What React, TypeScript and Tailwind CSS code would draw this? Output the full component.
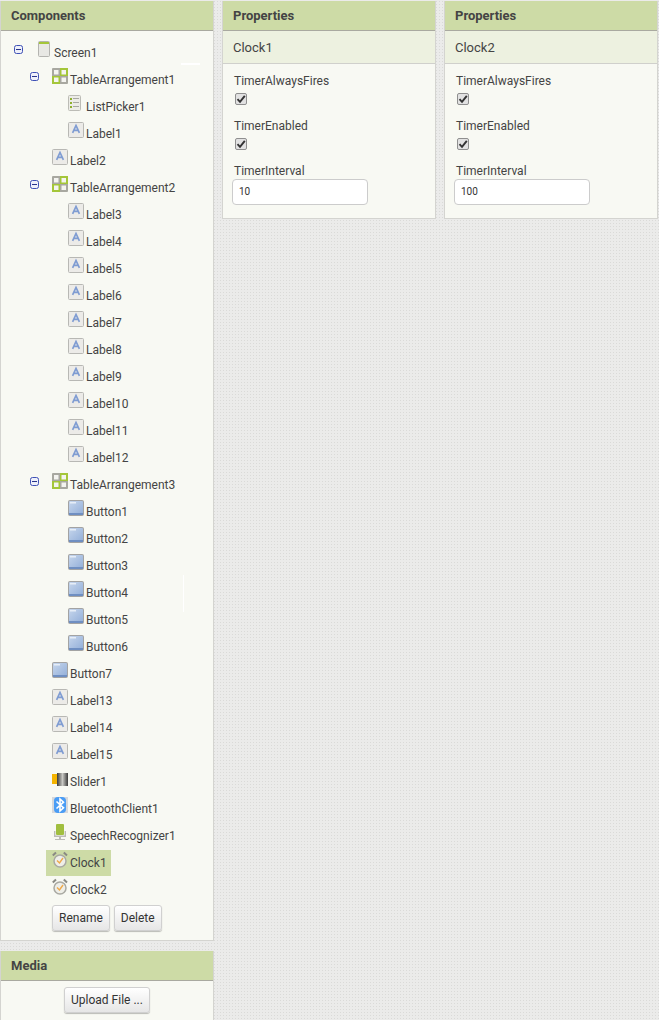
import React from 'react';

const font = "font-['Roboto',sans-serif]";

function Minus() {
  return (
    <svg width="9" height="9" viewBox="0 0 9 9" className="block">
      <rect x="0.5" y="0.5" width="8" height="8" rx="2" fill="#eef0fa" stroke="#3f51b5" />
      <rect x="2" y="4" width="5" height="1" fill="#27348b" />
    </svg>
  );
}

function ScreenIcon() {
  return (
    <svg width="12" height="16" viewBox="0 0 12 16" className="block">
      <rect x="0.5" y="0.5" width="11" height="15" rx="1" fill="#e8e8e4" stroke="#b4b4b0" />
      <rect x="1" y="1" width="10" height="2" fill="#a4c639" />
    </svg>
  );
}

function TableIcon() {
  return (
    <svg width="16" height="16" viewBox="0 0 16 16" className="block">
      <rect width="16" height="16" rx="1" fill="#a8a8a0" />
      <rect x="8" y="0" width="8" height="8" fill="#a4c639" />
      <rect x="0" y="8" width="8" height="8" fill="#a4c639" />
      <rect x="2" y="2" width="4.5" height="4.5" fill="#f4f4f0" />
      <rect x="9.5" y="2" width="4.5" height="4.5" fill="#f4f4f0" />
      <rect x="2" y="9.5" width="4.5" height="4.5" fill="#f4f4f0" />
      <rect x="9.5" y="9.5" width="4.5" height="4.5" fill="#f4f4f0" />
    </svg>
  );
}

function ListIcon() {
  return (
    <svg width="13" height="16" viewBox="0 0 13 16" className="block">
      <rect x="0.5" y="0.5" width="12" height="15" rx="1" fill="#ecece6" stroke="#bcbcb6" />
      <rect x="2" y="3" width="2" height="2" fill="#8fb02f" />
      <rect x="2" y="7" width="2" height="2" fill="#8fb02f" />
      <rect x="2" y="11" width="2" height="2" fill="#8fb02f" />
      <rect x="5" y="3" width="6" height="1" fill="#a8a8a2" />
      <rect x="5" y="7" width="6" height="1" fill="#a8a8a2" />
      <rect x="5" y="11" width="6" height="1" fill="#a8a8a2" />
    </svg>
  );
}

function LabelIcon() {
  return (
    <svg width="16" height="16" viewBox="0 0 16 16" className="block">
      <rect x="0.5" y="0.5" width="15" height="15" rx="1" fill="#ecebe8" stroke="#b8b8b4" />
      <path d="M4.6 10.8 L8 3.5 L11.4 10.8 M5.8 8.4 H10.2" fill="none" stroke="#7f9cd2" strokeWidth="1.7" />
    </svg>
  );
}

function ButtonIcon() {
  return (
    <svg width="16" height="16" viewBox="0 0 16 16" className="block">
      <defs>
        <linearGradient id="btnFill" x1="0" y1="0" x2="1" y2="1">
          <stop offset="0" stopColor="#c6d6ec" />
          <stop offset="1" stopColor="#93afd9" />
        </linearGradient>
      </defs>
      <rect x="0" y="0" width="16" height="16" rx="2" fill="#a3a3a3" />
      <rect x="1" y="1" width="14" height="13" rx="1" fill="url(#btnFill)" />
      <rect x="1" y="13" width="14" height="2" fill="#6f8fc2" />
      <rect x="2" y="2" width="6" height="1.5" fill="#e6edf7" />
    </svg>
  );
}

function SliderIcon() {
  return (
    <svg width="16" height="16" viewBox="0 0 16 16" className="block">
      <defs>
        <linearGradient id="sldFill" x1="0" y1="0" x2="1" y2="0">
          <stop offset="0" stopColor="#3a3a3a" />
          <stop offset="0.5" stopColor="#c9c9c4" />
          <stop offset="1" stopColor="#3a3a3a" />
        </linearGradient>
      </defs>
      <rect x="0" y="4" width="6" height="10" fill="#f5b400" />
      <rect x="5" y="3" width="11" height="13" fill="url(#sldFill)" />
    </svg>
  );
}

function BluetoothIcon() {
  return (
    <svg width="16" height="16" viewBox="0 0 16 16" className="block">
      <rect width="16" height="16" fill="#d6d8dc" />
      <rect x="2" y="0" width="12" height="16" rx="4" fill="#4a9df5" />
      <path d="M4.5 4.5 L11.5 10.8 L8 14 V2 L11.5 5.2 L4.5 11.5" fill="none" stroke="#fff" strokeWidth="1.6" />
    </svg>
  );
}

function SpeechIcon() {
  return (
    <svg width="15" height="16" viewBox="0 0 15 16" className="block">
      <rect x="4" y="0" width="8" height="11" rx="1" fill="#a1bf3f" />
      <path d="M2.7 7 V12.3 H13.3 V7" fill="none" stroke="#bcbcb6" strokeWidth="1.4" />
      <rect x="7" y="12" width="2" height="3" fill="#bcbcb6" />
      <rect x="3" y="15" width="10" height="1" fill="#bcbcb6" />
    </svg>
  );
}

function ClockIcon() {
  return (
    <svg width="16" height="17" viewBox="0 0 16 17" className="block">
      <path d="M0.8 4.5 L4 1.5 M15 4.5 L11.8 1.5" stroke="#8a8a84" strokeWidth="2" />
      <circle cx="8" cy="10" r="6" fill="#eeeee8" stroke="#a9a9a2" strokeWidth="1.5" />
      <path d="M5 9.5 L7.5 12 L11 7" fill="none" stroke="#eea94a" strokeWidth="1.4" />
    </svg>
  );
}

function CheckedBox() {
  return (
    <span className="mt-[4px] mb-[13px] ml-[1px] flex h-[12px] w-[12px] items-center justify-center rounded-[2px] border border-[#8f8f8f] bg-[#e2e2e2]">
      <svg width="10" height="10" viewBox="0 0 10 10" className="block">
        <path d="M1.5 5.2 L4 7.8 L8.8 1.8" fill="none" stroke="#333" strokeWidth="1.9" />
      </svg>
    </span>
  );
}

type Row = { name: string; icon: React.ReactNode; depth: 0 | 1 | 2; toggle?: boolean; selected?: boolean };

const rows: Row[] = [
  { name: 'Screen1', icon: <ScreenIcon />, depth: 0, toggle: true },
  { name: 'TableArrangement1', icon: <TableIcon />, depth: 1, toggle: true },
  { name: 'ListPicker1', icon: <ListIcon />, depth: 2 },
  { name: 'Label1', icon: <LabelIcon />, depth: 2 },
  { name: 'Label2', icon: <LabelIcon />, depth: 1 },
  { name: 'TableArrangement2', icon: <TableIcon />, depth: 1, toggle: true },
  ...['Label3', 'Label4', 'Label5', 'Label6', 'Label7', 'Label8', 'Label9', 'Label10', 'Label11', 'Label12'].map(
    (name): Row => ({ name, icon: <LabelIcon />, depth: 2 })
  ),
  { name: 'TableArrangement3', icon: <TableIcon />, depth: 1, toggle: true },
  ...['Button1', 'Button2', 'Button3', 'Button4', 'Button5', 'Button6'].map(
    (name): Row => ({ name, icon: <ButtonIcon />, depth: 2 })
  ),
  { name: 'Button7', icon: <ButtonIcon />, depth: 1 },
  { name: 'Label13', icon: <LabelIcon />, depth: 1 },
  { name: 'Label14', icon: <LabelIcon />, depth: 1 },
  { name: 'Label15', icon: <LabelIcon />, depth: 1 },
  { name: 'Slider1', icon: <SliderIcon />, depth: 1 },
  { name: 'BluetoothClient1', icon: <BluetoothIcon />, depth: 1 },
  { name: 'SpeechRecognizer1', icon: <SpeechIcon />, depth: 1 },
  { name: 'Clock1', icon: <ClockIcon />, depth: 1, selected: true },
  { name: 'Clock2', icon: <ClockIcon />, depth: 1 },
];

function TreeRow({ row }: { row: Row }) {
  const indent = row.depth === 0 ? 'pl-[13px]' : row.depth === 1 ? 'pl-[29px]' : 'pl-[45px]';
  return (
    <div className={`flex h-[27px] items-start ${indent}`}>
      <div className={`mt-[5px] shrink-0 ${row.depth === 0 ? 'w-[24px]' : 'w-[22px]'}`}>
        {row.toggle && <Minus />}
      </div>
      <div className={`ml-[-6px] flex h-[26px] pl-[6px] pr-[4px] ${row.selected ? 'bg-[#cddba6]' : ''}`}>
        <div className={`mt-[1px] shrink-0 ${row.depth === 0 ? 'w-[16px]' : 'w-[18px]'}`}>{row.icon}</div>
        <span className="pt-[5px] text-[12px] leading-[16px] text-[#444]">{row.name}</span>
      </div>
    </div>
  );
}

function PanelHeader({ title }: { title: string }) {
  return (
    <div className="flex h-[30px] items-center border-b border-[#a9a9a0] bg-[#cddba6] pl-[10px] text-[13px] font-bold text-[#444]">
      {title}
    </div>
  );
}

function GrayButton({ label }: { label: string }) {
  return (
    <button className="h-[26px] rounded-[3px] border border-[#d0d0d0] bg-gradient-to-b from-white to-[#e6e6e6] px-[6px] text-[12px] leading-none text-[#333] shadow-[0_1px_1px_rgba(0,0,0,0.25)]">
      {label}
    </button>
  );
}

function Props({ title, interval }: { title: string; interval: string }) {
  return (
    <div className="w-[214px] border-x border-b border-[#d4d4d0] bg-[#f8f9f3]">
      <PanelHeader title="Properties" />
      <div className="flex h-[33px] items-center border-b border-[#d0d0cc] bg-[#edf1e0] pl-[10px] pt-[1px] text-[13px] text-[#444]">
        {title}
      </div>
      <div className="px-[11px] pt-[9px] pb-[13px] text-[12px] leading-[16px] text-[#444]">
        <div>TimerAlwaysFires</div>
        <CheckedBox />
        <div>TimerEnabled</div>
        <CheckedBox />
        <div>TimerInterval</div>
        <input
          readOnly
          value={interval}
          className="ml-[-2px] block h-[26px] w-[136px] rounded-[4px] border border-[#ccc] bg-white px-[6px] pb-[1px] text-[10px] text-[#333] outline-none"
        />
      </div>
    </div>
  );
}

export default function App() {
  return (
    <div className={`${font} relative flex h-[1020px] w-[659px] items-start gap-[8px] overflow-hidden bg-[#ebebea] bg-[radial-gradient(#dadad8_1px,transparent_1px)] bg-[length:3px_3px] pt-[1px]`}>
      <div className="flex w-[214px] flex-col gap-[10px]">
        <div className="h-[940px] border-x border-b border-[#d4d4d0] bg-[#f8f9f3]">
          <PanelHeader title="Components" />
          <div className="pt-[9px]">
            {rows.map((row) => (
              <TreeRow key={row.name} row={row} />
            ))}
          </div>
          <div className="flex gap-[4px] pl-[51px] pt-[1px]">
            <GrayButton label="Rename" />
            <GrayButton label="Delete" />
          </div>
        </div>
        <div className="h-[69px] border-x border-[#d4d4d0] bg-[#f8f9f3]">
          <PanelHeader title="Media" />
          <div className="flex justify-center pt-[6px]">
            <GrayButton label="Upload File ..." />
          </div>
        </div>
      </div>
      <Props title="Clock1" interval="10" />
      <Props title="Clock2" interval="100" />
      {/* stray repaint lines left over in the tree panel */}
      <div className="absolute left-[181px] top-[63px] h-[2px] w-[19px] bg-white" />
      <div className="absolute left-[183px] top-[575px] h-[37px] w-[1px] bg-white" />
    </div>
  );
}
